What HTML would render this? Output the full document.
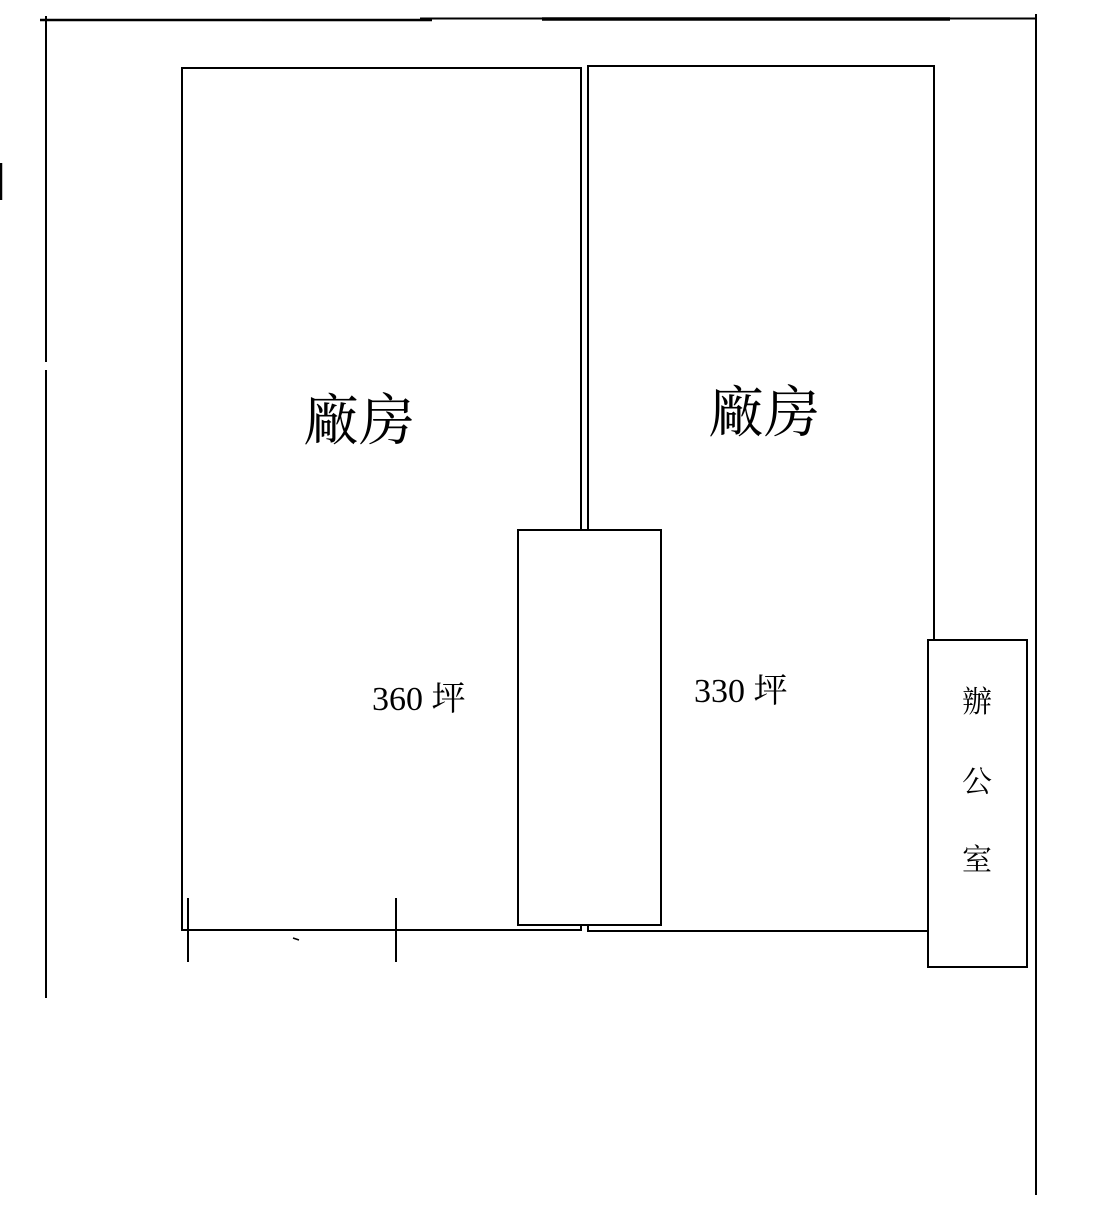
<!DOCTYPE html>
<html><head><meta charset="utf-8"><style>
html,body{margin:0;padding:0;background:#fff;}
svg{display:block}
text{font-family:"Liberation Serif","Noto Serif CJK SC","Noto Sans CJK TC",serif;fill:#000}
</style></head><body>
<svg width="1118" height="1222" viewBox="0 0 1118 1222" xmlns="http://www.w3.org/2000/svg">
<g stroke="#000" fill="none">
<!-- top boundary -->
<line x1="40" y1="20" x2="432" y2="20" stroke-width="2.5"/>
<line x1="262" y1="21.5" x2="430" y2="21.5" stroke="#bbb" stroke-width="1"/>
<line x1="420" y1="18.5" x2="1036" y2="18.5" stroke-width="2"/>
<line x1="542" y1="19" x2="950" y2="19" stroke-width="3.5"/>
<!-- left boundary -->
<line x1="46" y1="16" x2="46" y2="362" stroke-width="2"/>
<line x1="46" y1="370" x2="46" y2="998" stroke-width="2"/>
<line x1="1" y1="163" x2="1" y2="200" stroke-width="2.5"/>
<!-- right boundary -->
<line x1="1036" y1="14" x2="1036" y2="1195" stroke-width="2"/>
<!-- buildings -->
<rect x="182" y="68" width="399" height="862" stroke-width="2"/>
<rect x="588" y="66" width="346" height="865" stroke-width="2"/>
<rect x="518" y="530" width="143" height="395" stroke-width="2" fill="#fff"/>
<rect x="928" y="640" width="99" height="327" stroke-width="2" fill="#fff"/>
<!-- gate marks -->
<line x1="188" y1="898" x2="188" y2="962" stroke-width="2"/>
<line x1="396" y1="898" x2="396" y2="962" stroke-width="2"/>
<line x1="293" y1="938" x2="299" y2="940" stroke-width="1.5"/>
</g>
<text x="303" y="440" font-size="56">廠房</text>
<text x="708" y="432" font-size="56">廠房</text>
<text x="372" y="710" font-size="34">360 坪</text>
<text x="694" y="702" font-size="34">330 坪</text>
<text x="962" y="712" font-size="30">辦</text>
<text x="962" y="792" font-size="30">公</text>
<text x="962" y="870" font-size="30">室</text>
</svg>
</body></html>
